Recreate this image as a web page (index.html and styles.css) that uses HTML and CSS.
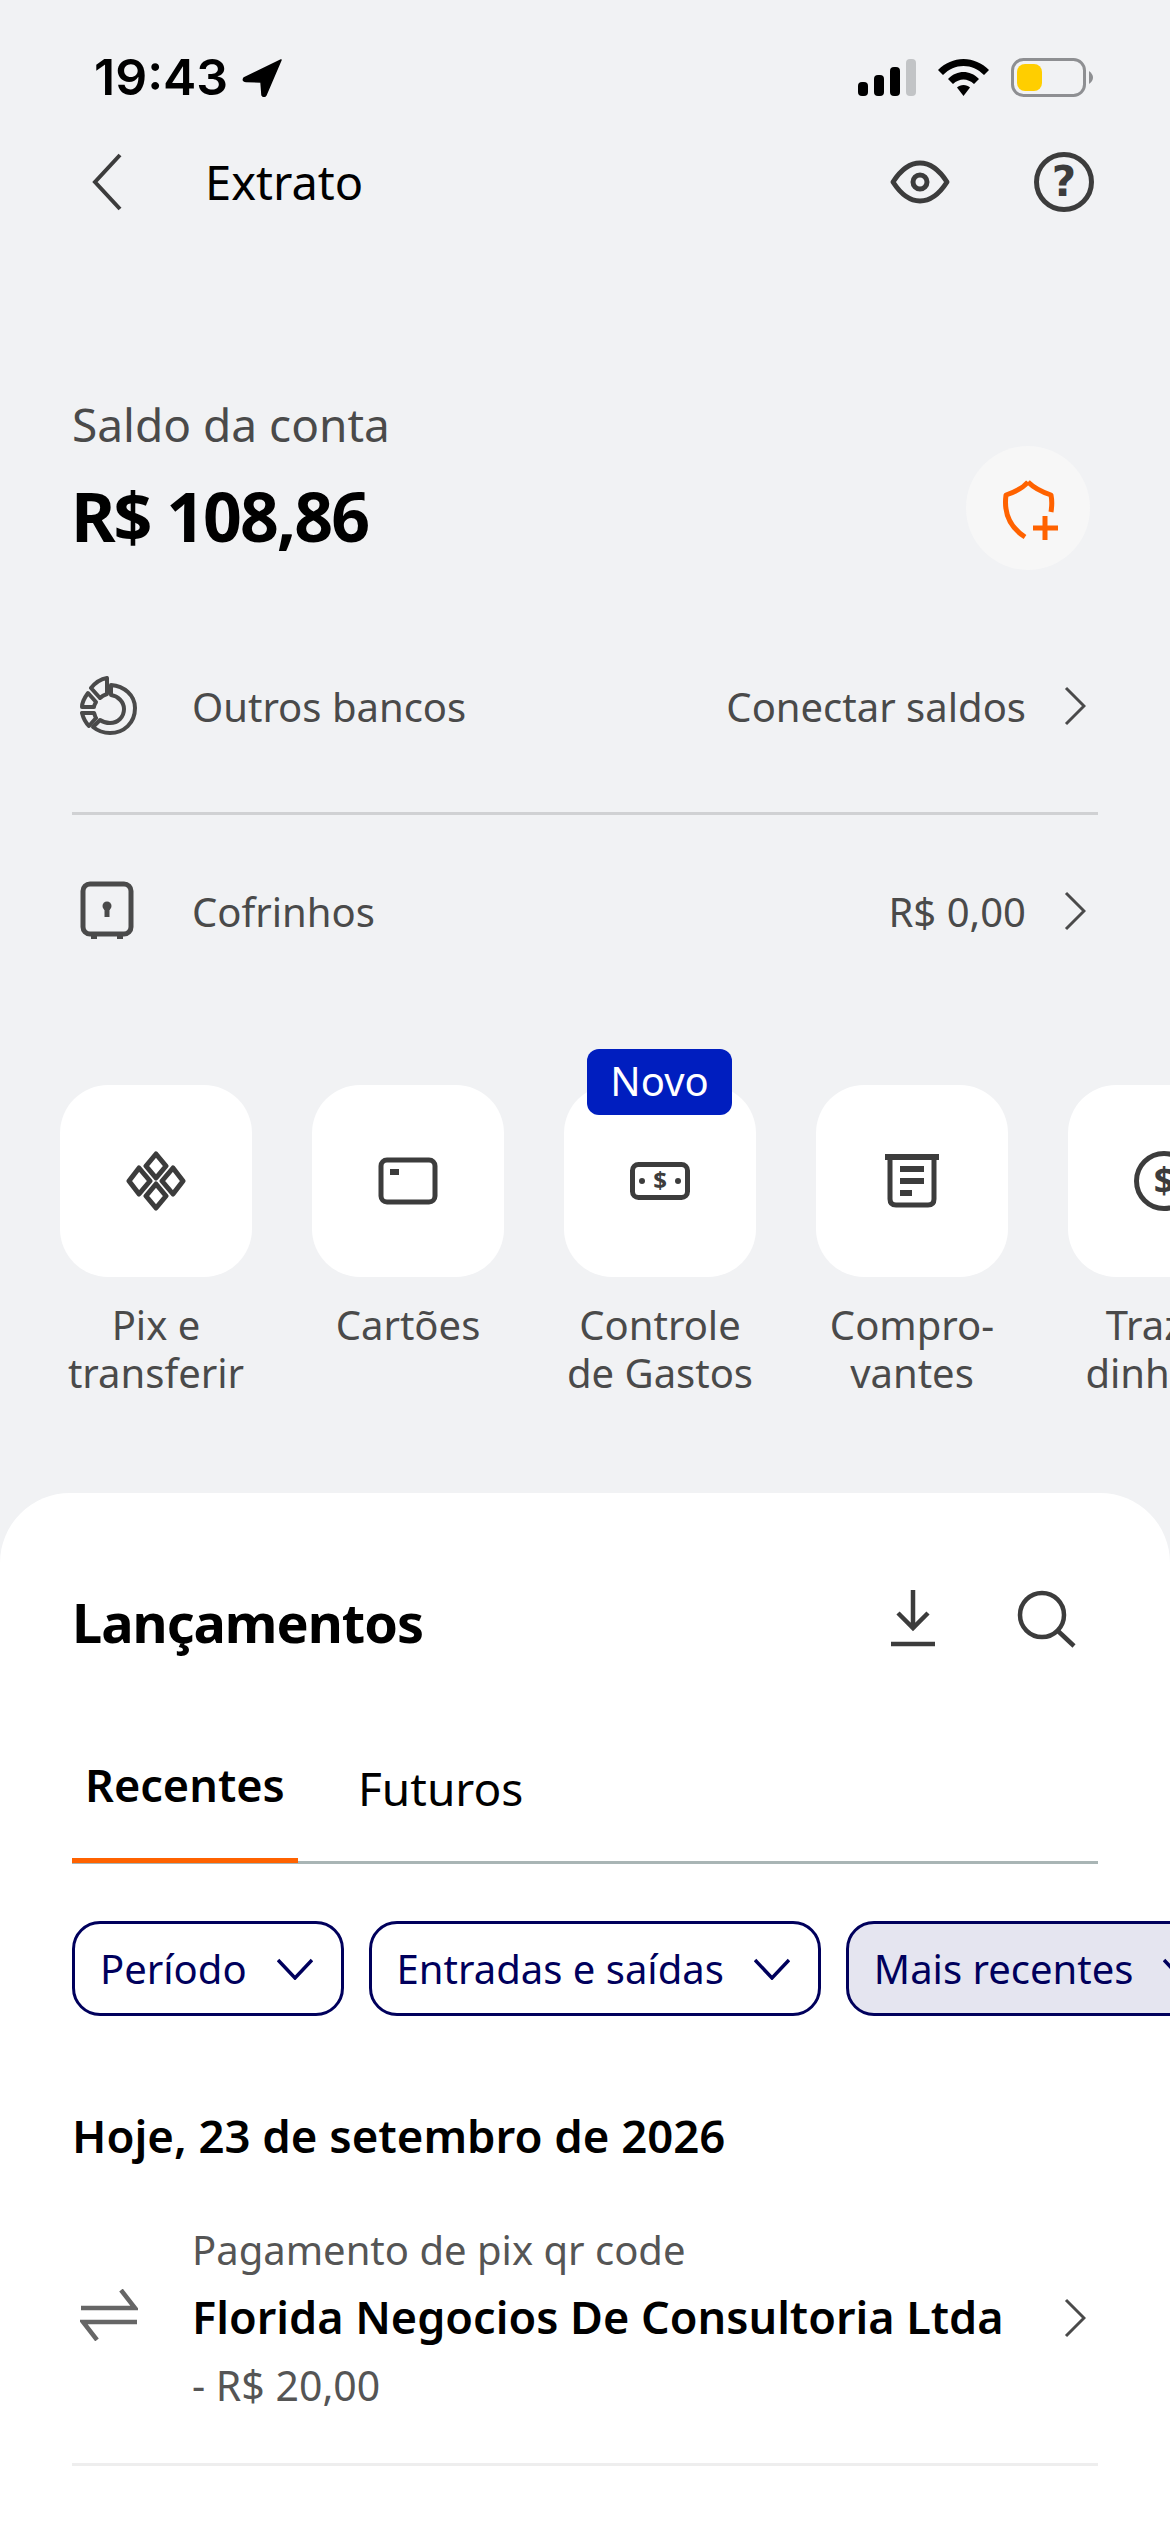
FILE: index.html
```html
<!DOCTYPE html>
<html lang="pt-BR">
<head>
    <meta charset="UTF-8">
    <meta name="viewport" content="width=device-width, initial-scale=1.0">
    <title>Extrato</title>
    <link rel="stylesheet" href="styles.css">
</head>
<body>
    <!-- barra de status -->
    <div class="statusbar">
        <div class="clock">
            <span>19:43</span>
            <svg class="arrow" width="40" height="38" viewBox="0 0 40 38"><path d="M39 1 L2 19 Q0 22 4 22.500 L19 23 L20 36 Q22 39 24 36 Z" fill="#000" stroke="#000" stroke-width="1.500" stroke-linejoin="round"/></svg>
        </div>
        <div class="status-icons">
            <svg width="58" height="37" viewBox="0 0 58 37">
                <rect x="0" y="23" width="10" height="14" rx="4" fill="#000"/>
                <rect x="16" y="16" width="10" height="21" rx="4" fill="#000"/>
                <rect x="32" y="8" width="10" height="29" rx="4" fill="#000"/>
                <rect x="48" y="0" width="10" height="37" rx="4" fill="#c2c4c6"/>
            </svg>
            <svg width="51" height="37" viewBox="0 0 51 37">
                <path d="M25.5 0 C35 0 44 4 51 11 L46 16 C40 10 33 7 25.5 7 C18 7 11 10 5 16 L0 11 C7 4 16 0 25.5 0 Z" fill="#000"/>
                <path d="M25.5 13 C31 13 36 15 41 20 L36 25 C33 22 29 20.500 25.500 20.500 C22 20.500 18 22 15 25 L10 20 C15 15 20 13 25.500 13 Z" fill="#000"/>
                <path d="M25.500 26 C28 26 30.500 27 32 28.500 L25.500 37 L19 28.500 C20.500 27 23 26 25.500 26 Z" fill="#000"/>
            </svg>
            <svg width="82" height="39" viewBox="0 0 82 39">
                <rect x="1.500" y="1.500" width="72" height="36" rx="11" fill="none" stroke="#8e8f92" stroke-width="3"/>
                <rect x="6" y="6" width="25" height="27" rx="8" fill="#ffce00"/>
                <path d="M78 13 Q82 16 82 19.500 Q82 23 78 26 Z" fill="#8e8f92"/>
            </svg>
        </div>
    </div>

    <!-- navegacao -->
    <header class="nav">
        <div class="nav-left">
            <svg width="30" height="58" viewBox="0 0 30 58"><path d="M28 2 L3 29 L28 56" fill="none" stroke="#3c3c3c" stroke-width="4"/></svg>
            <span class="nav-title">Extrato</span>
        </div>
        <div class="nav-right">
            <svg width="60" height="44" viewBox="0 0 60 44">
                <path d="M3 22 C12 8 21 3 30 3 C39 3 48 8 57 22 C48 36 39 41 30 41 C21 41 12 36 3 22 Z" fill="none" stroke="#3c3c3c" stroke-width="5" stroke-linejoin="round"/>
                <circle cx="30" cy="22" r="7" fill="none" stroke="#3c3c3c" stroke-width="5"/>
            </svg>
            <svg width="60" height="60" viewBox="0 0 60 60">
                <circle cx="30" cy="30" r="27.500" fill="none" stroke="#3c3c3c" stroke-width="5"/>
                <text x="30" y="44" text-anchor="middle" class="help-mark">?</text>
            </svg>
        </div>
    </header>

    <!-- saldo -->
    <section class="balance">
        <div class="balance-text">
            <div class="balance-label">Saldo da conta</div>
            <div class="balance-value">R$ 108,86</div>
        </div>
        <div class="shield">
            <svg width="60" height="60" viewBox="0 0 60 60">
                <path d="M27 2 C22 8 14 12 5 15 C3 30 7 46 24 57 M27 2 C33 8 41 12 50 15 C51 20 51 26 50 32" fill="none" stroke="#ff6200" stroke-width="5" stroke-linejoin="round"/>
                <path d="M44 36 V60 M32 48 H57" fill="none" stroke="#ff6200" stroke-width="5"/>
            </svg>
        </div>
    </section>

    <section class="accounts">
        <div class="row">
            <svg class="row-icon" width="58" height="60" viewBox="0 0 58 60">
                <path d="M31 9 C44 10 55 19 55 32 C55 47 44 57 30 57 C24 57 18 55 13 51 L20 44 C23 46 26 47 30 47 C38 47 44 41 44 33 C44 26 38 20 31 19 Z" fill="none" stroke="#4a4a4a" stroke-width="4" stroke-linejoin="round"/>
                <path d="M27 2 V18 C24 19 22 20 20 22 L11 12 C15 7 21 3 27 2 Z" fill="none" stroke="#4a4a4a" stroke-width="4" stroke-linejoin="round"/>
                <path d="M8 17 L16 26 C15 28 14 29 14 31 L2 31 C2 26 5 21 8 17 Z" fill="none" stroke="#4a4a4a" stroke-width="4" stroke-linejoin="round"/>
                <path d="M2 37 H14 C15 39 15 41 16 42 L9 50 C5 46 3 41 2 37 Z" fill="none" stroke="#4a4a4a" stroke-width="4" stroke-linejoin="round"/>
            </svg>
            <span class="row-label">Outros bancos</span>
            <span class="row-value">Conectar saldos</span>
            <svg class="chevron" width="22" height="40" viewBox="0 0 22 40"><path d="M2 2 L20 20 L2 38" fill="none" stroke="#4a4a4a" stroke-width="3"/></svg>
        </div>
        <div class="divider"></div>
        <div class="row">
            <svg class="row-icon" width="58" height="60" viewBox="0 0 58 60">
                <rect x="3" y="3" width="48" height="50" rx="7" fill="none" stroke="#4a4a4a" stroke-width="5"/>
                <circle cx="27" cy="25" r="4.500" fill="#4a4a4a"/>
                <rect x="24.500" y="26" width="5" height="10" fill="#4a4a4a"/>
                <rect x="11" y="54" width="6" height="4" fill="#4a4a4a"/>
                <rect x="37" y="54" width="6" height="4" fill="#4a4a4a"/>
            </svg>
            <span class="row-label">Cofrinhos</span>
            <span class="row-value">R$ 0,00</span>
            <svg class="chevron" width="22" height="40" viewBox="0 0 22 40"><path d="M2 2 L20 20 L2 38" fill="none" stroke="#4a4a4a" stroke-width="3"/></svg>
        </div>
    </section>

    <!-- atalhos -->
    <section class="shortcuts">
        <div class="shortcut">
            <div class="shortcut-card">
                <svg width="60" height="60" viewBox="0 0 60 60" fill="none" stroke="#3c3c3c" stroke-width="5" stroke-linejoin="round">
                    <path d="M30 3 L40 15 L30 27 L20 15 Z"/>
                    <path d="M30 33 L40 45 L30 57 L20 45 Z"/>
                    <path d="M13 17 L24 30 L13 43 L3 30 Z"/>
                    <path d="M47 17 L57 30 L47 43 L36 30 Z"/>
                </svg>
            </div>
            <div class="shortcut-label">Pix e<br>transferir</div>
        </div>
        <div class="shortcut">
            <div class="shortcut-card">
                <svg width="60" height="48" viewBox="0 0 60 48">
                    <rect x="3" y="3" width="54" height="42" rx="6" fill="none" stroke="#3c3c3c" stroke-width="5"/>
                    <rect x="12" y="12" width="9" height="6" fill="#3c3c3c"/>
                </svg>
            </div>
            <div class="shortcut-label">Cartões</div>
        </div>
        <div class="shortcut">
            <div class="badge">Novo</div>
            <div class="shortcut-card">
                <svg width="60" height="38" viewBox="0 0 60 38">
                    <rect x="2.500" y="2.500" width="55" height="33" rx="6" fill="none" stroke="#3c3c3c" stroke-width="5"/>
                    <circle cx="12" cy="19" r="3" fill="#3c3c3c"/>
                    <circle cx="48" cy="19" r="3" fill="#3c3c3c"/>
                    <text x="30" y="27" text-anchor="middle" class="icon-money">$</text>
                </svg>
            </div>
            <div class="shortcut-label">Controle<br>de Gastos</div>
        </div>
        <div class="shortcut">
            <div class="shortcut-card">
                <svg width="54" height="54" viewBox="0 0 54 54">
                    <path d="M0 3 H54" stroke="#3c3c3c" stroke-width="6"/>
                    <path d="M5 3 V45 Q5 51 11 51 H43 Q49 51 49 45 V3" fill="none" stroke="#3c3c3c" stroke-width="5"/>
                    <path d="M15 15 H39 M15 27 H39 M15 39 H27" stroke="#3c3c3c" stroke-width="6"/>
                </svg>
            </div>
            <div class="shortcut-label">Compro-<br>vantes</div>
        </div>
        <div class="shortcut">
            <div class="shortcut-card">
                <svg width="60" height="60" viewBox="0 0 60 60">
                    <circle cx="30" cy="30" r="27.500" fill="none" stroke="#3c3c3c" stroke-width="5"/>
                    <text x="30" y="42" text-anchor="middle" class="icon-dollar">$</text>
                </svg>
            </div>
            <div class="shortcut-label">Trazer<br>dinheiro</div>
        </div>
    </section>

    <!-- lancamentos -->
    <main class="sheet">
        <div class="sheet-head">
            <h2 class="sheet-title">Lançamentos</h2>
            <div class="sheet-actions">
                <svg width="46" height="58" viewBox="0 0 46 58" fill="none" stroke="#3c3c3c" stroke-width="4.500">
                    <path d="M23 0 V38 M8 23 L23 38 L38 23"/>
                    <path d="M1 54 H45"/>
                </svg>
                <svg width="60" height="58" viewBox="0 0 60 58" fill="none" stroke="#3c3c3c" stroke-width="4.500">
                    <circle cx="26" cy="25" r="22"/>
                    <path d="M42 41 L58 56"/>
                </svg>
            </div>
        </div>

        <nav class="tabs">
            <div class="tab tab-active">Recentes</div>
            <div class="tab">Futuros</div>
        </nav>

        <div class="chips">
            <div class="chip">Período
                <svg width="36" height="22" viewBox="0 0 36 22"><path d="M1 2 L18 20 L35 2" fill="none" stroke="#00005c" stroke-width="3.500"/></svg>
            </div>
            <div class="chip">Entradas e saídas
                <svg width="36" height="22" viewBox="0 0 36 22"><path d="M1 2 L18 20 L35 2" fill="none" stroke="#00005c" stroke-width="3.500"/></svg>
            </div>
            <div class="chip chip-selected">Mais recentes
                <svg width="36" height="22" viewBox="0 0 36 22"><path d="M1 2 L18 20 L35 2" fill="none" stroke="#00005c" stroke-width="3.500"/></svg>
            </div>
        </div>

        <h3 class="day">Hoje, 23 de setembro de 2026</h3>

        <div class="entry">
            <svg class="entry-icon" width="58" height="52" viewBox="0 0 58 52" fill="none" stroke="#666" stroke-width="4.500">
                <path d="M1 19 H55 L41 1"/>
                <path d="M57 33 H3 L17 51"/>
            </svg>
            <div class="entry-text">
                <div class="entry-kind">Pagamento de pix qr code</div>
                <div class="entry-name">Florida Negocios De Consultoria Ltda</div>
                <div class="entry-amount">- R$ 20,00</div>
            </div>
            <svg class="chevron" width="22" height="40" viewBox="0 0 22 40"><path d="M2 2 L20 20 L2 38" fill="none" stroke="#4a4a4a" stroke-width="3"/></svg>
        </div>
        <div class="entry-line"></div>
    </main>
</body>
</html>
```

FILE: styles.css
```css
* {
    box-sizing: border-box;
}

html, body {
    margin: 0;
    padding: 0;
}

body {
    width: 1170px;
    height: 2532px;
    overflow: hidden;
    background-color: #f1f2f4;
    font-family: "Noto Sans", "Open Sans", sans-serif;
    color: #000;
}

svg {
    display: block;
    flex: none;
}

.statusbar {
    height: 97px;
    padding: 58px 77px 0 94px;
    display: flex;
    justify-content: space-between;
    align-items: center;
}

.clock {
    display: flex;
    align-items: center;
    gap: 14px;
    font-family: Inter, sans-serif;
    font-size: 50px;
    font-weight: 600;
    line-height: 39px;
}

.status-icons {
    display: flex;
    align-items: center;
    gap: 22px;
}

.nav {
    margin-top: 53px;
    height: 64px;
    padding: 0 76px 0 92px;
    display: flex;
    justify-content: space-between;
    align-items: center;
}

.nav-left {
    display: flex;
    align-items: center;
    gap: 83px;
}

.nav-title {
    font-size: 47px;
    line-height: 64px;
}

.nav-right {
    display: flex;
    align-items: center;
    gap: 84px;
}

.help-mark {
    font-family: "DejaVu Sans", sans-serif;
    font-size: 42px;
    font-weight: 700;
    fill: #3c3c3c;
}

.balance {
    margin-top: 180px;
    padding: 0 80px 0 72px;
    display: flex;
    justify-content: space-between;
    align-items: flex-end;
}

.balance-text {
    padding-bottom: 14px;
}

.balance-label {
    font-size: 46px;
    line-height: 60px;
    color: #4a4a4a;
}

.balance-value {
    margin-top: 22px;
    margin-left: -1px;
    font-size: 68px;
    font-weight: 700;
    line-height: 80px;
    letter-spacing: -2px;
}

.shield {
    width: 124px;
    height: 124px;
    border-radius: 50%;
    background: #f7f7f7;
    display: flex;
    align-items: center;
    justify-content: center;
    padding: 4px 0 0 6px;
}

.accounts {
    margin-top: 73px;
    padding: 0 72px;
}

.row {
    height: 126px;
    display: flex;
    align-items: center;
    padding: 0 12px 0 8px;
    font-size: 40px;
    color: #4a4a4a;
}

.row-label {
    margin-left: 54px;
    flex: 1;
}

.row-value {
    margin-right: 38px;
}

.divider {
    height: 3px;
    margin: 43px 0 33px;
    background: #d0d1d3;
}

.shortcuts {
    margin-top: 111px;
    padding-left: 60px;
    display: flex;
    gap: 60px;
    height: 312px;
}

.shortcut {
    position: relative;
    width: 192px;
    flex: none;
}

.shortcut-card {
    width: 192px;
    height: 192px;
    border-radius: 48px;
    background: #fff;
    display: flex;
    align-items: center;
    justify-content: center;
}

.shortcut-label {
    margin-top: 24px;
    font-size: 40px;
    line-height: 48px;
    text-align: center;
    color: #4a4a4a;
}

.badge {
    position: absolute;
    top: -36px;
    left: 23px;
    width: 145px;
    height: 66px;
    border-radius: 12px;
    background: #001ebf;
    color: #fff;
    font-size: 40px;
    line-height: 64px;
    text-align: center;
}

.icon-money {
    font-family: "Noto Sans", sans-serif;
    font-size: 24px;
    font-weight: 700;
    fill: #3c3c3c;
}

.icon-dollar {
    font-family: "Noto Sans", sans-serif;
    font-size: 36px;
    font-weight: 700;
    fill: #3c3c3c;
}

.sheet {
    margin-top: 96px;
    height: 1039px;
    padding: 94px 72px 0;
    background: #fff;
    border-radius: 70px 70px 0 0;
}

.sheet-head {
    height: 70px;
    display: flex;
    justify-content: space-between;
    align-items: center;
}

.sheet-title {
    margin: 0;
    font-size: 54px;
    font-weight: 700;
    line-height: 70px;
    letter-spacing: -1px;
}

.sheet-actions {
    display: flex;
    gap: 80px;
    padding-right: 22px;
    margin-top: -6px;
}

.tabs {
    margin-top: 95px;
    height: 112px;
    display: flex;
    border-bottom: 3px solid #a9b5b5;
}

.tab {
    font-size: 46px;
    line-height: 66px;
    padding: 3px 13px 0;
}

.tab-active {
    font-size: 45px;
    font-weight: 600;
    padding-top: 0;
    height: 111px;
    width: 226px;
    margin-right: 47px;
    border-bottom: 5px solid #ff6200;
}

.chips {
    margin-top: 57px;
    display: flex;
    gap: 25px;
    width: 1200px;
}

.chip {
    height: 95px;
    padding: 0 28px 0 25px;
    display: flex;
    align-items: center;
    gap: 30px;
    flex: none;
    border: 3px solid #00005c;
    border-radius: 28px;
    color: #00005c;
    font-size: 40px;
    white-space: nowrap;
}

.chip-selected {
    background: #e5e5f0;
}

.day {
    margin: 89px 0 0;
    font-size: 45.500px;
    font-weight: 600;
    line-height: 60px;
}

.entry {
    margin-top: 55px;
    display: flex;
    align-items: center;
    padding-right: 12px;
}

.entry-icon {
    margin: -6px 0 0 8px;
}

.entry-text {
    flex: 1;
    margin-left: 54px;
}

.entry-kind {
    font-size: 40px;
    line-height: 60px;
    color: #555;
}

.entry-name {
    margin-top: 7px;
    font-size: 45px;
    font-weight: 600;
    line-height: 60px;
}

.entry-amount {
    margin-top: 8px;
    font-size: 41px;
    line-height: 60px;
    color: #555;
}

.entry-line {
    margin-top: 48px;
    height: 3px;
    background: #eeeeee;
}
```
